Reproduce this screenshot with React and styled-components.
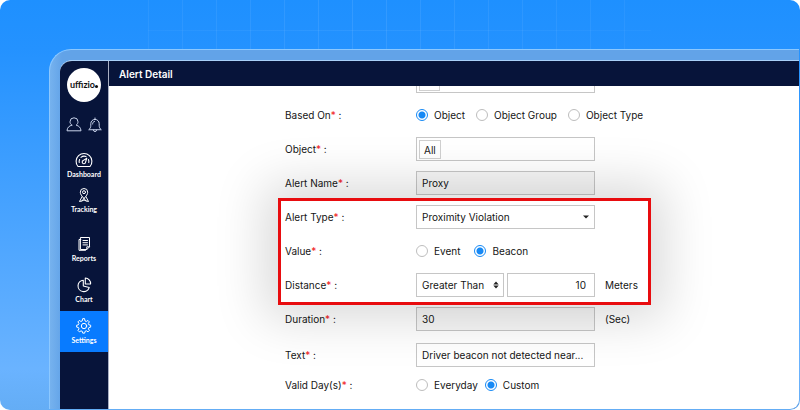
import React from "react";
import styled, { createGlobalStyle, css } from "styled-components";

const GlobalStyle = createGlobalStyle`
  *, *::before, *::after { box-sizing: border-box; }
  body { margin: 0; background: #fff; font-family: Inter, "Liberation Sans", sans-serif; }
`;

const line = "#c6c6c6";
const navy = "#07143a";

const Stage = styled.div`
  height: 100vh;
  display: flex;
  flex-direction: column;
  border-radius: 10px;
  overflow: hidden;
  padding: 0 1px 1px 0;
  background: linear-gradient(#1e90ff 0%, #2492ff 12%, #6ab3ff 90%, #64adf5 100%);
`;

const GridBand = styled.div`
  flex: none;
  height: 49px;
  margin: 0 148px;
  background:
    linear-gradient(rgba(255, 255, 255, 0.06), rgba(255, 255, 255, 0.06)) 0 30px / 100% 1px no-repeat,
    repeating-linear-gradient(90deg, rgba(255, 255, 255, 0.09) 0 1px, transparent 1px 34px);
  mask-image: linear-gradient(90deg, rgba(0, 0, 0, 0.6), #000 40%, rgba(0, 0, 0, 0.5));
`;

const Bezel = styled.div`
  flex: 1;
  min-height: 0;
  display: flex;
  margin-left: 49px;
  padding: 10px 0 0 10px;
  border: solid #8cc8ff;
  border-width: 1px 0 0 1px;
  border-top-left-radius: 22px;
  background: linear-gradient(90deg, #76b2ee, #62a3e8 12px);
`;

const Screen = styled.div`
  flex: 1;
  min-width: 0;
  display: flex;
  border-top: 1px solid #a9d0f8;
  border-top-left-radius: 12px;
  border-bottom-right-radius: 9px;
  overflow: hidden;
  background: #fff;
`;

const Sidebar = styled.aside`
  flex: none;
  width: 49px;
  display: flex;
  flex-direction: column;
  align-items: center;
  padding-top: 7px;
  border-right: 1px solid #a9b0c4;
  background: ${navy};
  color: #fff;
`;

const Logo = styled.div`
  width: 34px;
  height: 34px;
  display: flex;
  align-items: center;
  justify-content: center;
  border-radius: 50%;
  background: #fff;
  color: #111;
  font: 700 9px/12px Lato, sans-serif;
`;

const LogoDot = styled.i`
  width: 3px;
  height: 3px;
  margin-top: 2px;
  border-radius: 50%;
  background: #111;
`;

const QuickActions = styled.div`
  display: flex;
  gap: 6px;
  margin: 15px 0 12px;
`;

const IconButton = styled.button`
  padding: 0;
  border: 0;
  background: none;
  color: #c8d2ea;
  display: flex;
`;

const Nav = styled.nav`
  width: 100%;
  display: flex;
  flex-direction: column;
`;

const NavItem = styled.a`
  display: flex;
  flex-direction: column;
  align-items: center;
  gap: 1px;
  height: ${(p) => (p.$compact ? 35 : 41)}px;
  padding-top: 7px;
  margin-bottom: ${(p) => (p.$endsGroup ? 8 : 0)}px;
  color: #fff;
  background: ${(p) => (p.$active ? "#087bff" : "transparent")};
  font: 700 7px/10px Lato, sans-serif;
  text-decoration: none;
`;

const Main = styled.main`
  flex: 1;
  min-width: 0;
  display: flex;
  flex-direction: column;
`;

const TitleBar = styled.header`
  flex: none;
  height: 25px;
  display: flex;
  align-items: center;
  padding-left: 10px;
  background: ${navy};
`;

const Title = styled.h1`
  margin: 0;
  color: #fff;
  font-size: 10px;
  line-height: 16px;
  font-weight: 600;
`;

const Viewport = styled.div`
  flex: 1;
  min-height: 0;
  overflow: hidden;
`;

const Form = styled.form`
  display: flex;
  flex-direction: column;
  gap: 10px;
  margin-top: -17px;
  padding-left: 176px;
  color: #151515;
  font-size: 10px;
  line-height: 16px;
`;

const Row = styled.div`
  display: grid;
  grid-template-columns: 131px 1fr;
  align-items: center;
  min-height: ${(p) => (p.$short ? 16 : 24)}px;
  margin-top: ${(p) => (p.$spaced ? 2 : 0)}px;
`;

const Highlight = styled.section`
  position: relative;
  width: 373px;
  display: flex;
  flex-direction: column;
  gap: 10px;
  margin: -7px 0 -8px -7px;
  padding: 4px 4px 5px;
  border: 3px solid #e80c0f;
  background: #fff;
  box-shadow: 0 0 50px 14px rgba(0, 0, 0, 0.15);
`;

const Star = styled.span`
  color: #f01818;
`;

const Controls = styled.div`
  display: flex;
  align-items: center;
  gap: ${(p) => p.$gap || 0}px;
`;

const box = css`
  height: 24px;
  border: 1px solid ${line};
  border-radius: 0;
  color: #151515;
  font: inherit;
  outline: 0;
`;

const TextInput = styled.input`
  ${box}
  width: ${(p) => p.$width || 179}px;
  padding: 0 ${(p) => (p.$number ? 8 : 5)}px 0 5px;
  text-align: ${(p) => (p.$number ? "right" : "left")};
  text-overflow: ellipsis;
  background: ${(p) => (p.readOnly ? "rgba(0, 0, 0, 0.03)" : "#fff")};
`;

const TagBox = styled.div`
  ${box}
  width: 179px;
  display: flex;
  align-items: center;
  padding: 0 2px;
  background: #fff;
`;

const Tag = styled.span`
  min-width: 21px;
  height: 19px;
  padding: 0 4px;
  border: 1px solid #d0d0d0;
  line-height: 18px;
`;

const SelectWrap = styled.div`
  width: ${(p) => p.$width}px;
  display: grid;
  align-items: center;

  > * { grid-area: 1 / 1; }
  > svg { justify-self: end; margin-right: 5px; pointer-events: none; }
`;

const Select = styled.select`
  ${box}
  width: 100%;
  padding: 0 0 0 5px;
  appearance: none;
  background: #fff;
`;

const RadioLabel = styled.label`
  display: flex;
  align-items: center;
  gap: 6px;
  white-space: nowrap;
`;

const Radio = styled.input`
  appearance: none;
  width: 12px;
  height: 12px;
  margin: 0;
  border: 1px solid #bdbdbd;
  border-radius: 50%;
  background: #fff;

  &:checked {
    border-color: #1689f5;
    background: radial-gradient(circle, #1689f5 3px, #fff 4px);
  }
`;

const Unit = styled.span`
  margin-left: 10px;
`;

const stroke = { fill: "none", stroke: "currentColor", strokeLinecap: "round", strokeLinejoin: "round" };

const UserIcon = () => (
  <svg width="16" height="16" viewBox="0 0 16 16" {...stroke} strokeWidth="1">
    <path d="M5.8 8.200C4.400 7.100 4 5.800 4 4.800a4 4 0 0 1 8 0c0 1-.4 2.300-1.800 3.400 2.800.7 4.600 2.400 4.800 5.600H1c.2-3.200 2-4.900 4.800-5.600Z" />
  </svg>
);

const BellIcon = () => (
  <svg width="14" height="16" viewBox="0 0 14 16" {...stroke} strokeWidth="1">
    <path d="M7 1v1.400M1 12.500c1.300-1 1.800-2.200 1.800-4.300V6.600a4.200 4.200 0 0 1 8.400 0v1.600c0 2.100.5 3.300 1.800 4.300ZM5.400 13a1.600 1.600 0 0 0 3.200 0" />
    <path d="M4.600 7c0-1.400.7-2.400 2-2.700" />
  </svg>
);

const DashboardIcon = () => (
  <svg width="18" height="16" viewBox="0 0 18 16" {...stroke} strokeWidth="1.100">
    <path d="M3 14.500A7.900 7.900 0 1 1 15 14.500Z" />
    <path d="M4.200 10.500a4.900 4.900 0 0 1 .4-3M6 5.300a4.900 4.900 0 0 1 5-.8M13.400 7.500a4.900 4.900 0 0 1 .4 3" />
    <path d="M11.800 6.200 10.600 10a1.700 1.700 0 1 1-2.200-1.600Z" />
  </svg>
);

const TrackingIcon = () => (
  <svg width="16" height="16" viewBox="0 0 16 16" {...stroke} strokeWidth="1">
    <path d="M8 11.500C5.600 9 4.300 7 4.300 5.200a3.700 3.700 0 0 1 7.400 0C11.700 7 10.400 9 8 11.500Z" />
    <circle cx="8" cy="5.200" r="1.500" />
    <path d="M6 9.800 3.500 14.500l2.300-.5L8 11.500l2.200 2.500 2.300.5L10 9.800M5.800 14l2.200-1 2.200 1" />
  </svg>
);

const ReportsIcon = () => (
  <svg width="16" height="16" viewBox="0 0 16 16" {...stroke} strokeWidth="1">
    <path d="M4.800 1.500h8.700v9.300l-2.700 2.700H4.800ZM13.500 10.800h-2.700v2.700M4.800 3.500H3v10.800h6.500" />
    <path d="M7 4.500h4.500M7 6.700h4.500M7 8.900h4.500" />
  </svg>
);

const ChartIcon = () => (
  <svg width="16" height="16" viewBox="0 0 16 16" {...stroke} strokeWidth="1.100">
    <path d="M7.300 3.200a5.700 5.700 0 1 0 5.900 7.300L7.300 9Z" />
    <path d="M9.300 1v6h5.300A5.600 5.600 0 0 0 9.300 1Z" />
  </svg>
);

const SettingsIcon = () => (
  <svg width="16" height="16" viewBox="0 0 24 24" {...stroke} strokeWidth="1.500">
    <path d="m10 1.500-.6 2.800-2 .9L5 3.700 2.900 5.800l1.500 2.400-.8 2-2.600.6v2.900l2.700.6.8 2L3 18.700 5.100 20.800l2.400-1.500 2 .8.600 2.600h2.900l.6-2.700 2-.8 2.400 1.600 2.100-2.100-1.500-2.400.8-2 2.600-.6v-2.900l-2.700-.6-.8-2 1.500-2.400-2.100-2.100-2.400 1.500-2-.8-.6-2.900Z" />
    <circle cx="12" cy="12" r="4" />
  </svg>
);

const CaretIcon = () => (
  <svg width="8" height="6" viewBox="0 0 8 6"><path d="M1 1.500h6l-3 3Z" fill="#222" /></svg>
);

const SortIcon = () => (
  <svg width="6" height="8" viewBox="0 0 6 8"><path d="M.3 3.500 3 .5l2.700 3ZM.3 4.500 3 7.500l2.700-3Z" fill="#222" /></svg>
);

const navItems = [
  { label: "Dashboard", Icon: DashboardIcon, compact: true },
  { label: "Tracking", Icon: TrackingIcon, endsGroup: true },
  { label: "Reports", Icon: ReportsIcon },
  { label: "Chart", Icon: ChartIcon },
  { label: "Settings", Icon: SettingsIcon, active: true },
];

function Field({ label, htmlFor, gap, children, ...row }) {
  return (
    <Row {...row}>
      <label htmlFor={htmlFor}>{label}<Star>*</Star> :</label>
      <Controls $gap={gap}>{children}</Controls>
    </Row>
  );
}

function RadioOption({ name, label, checked }) {
  return (
    <RadioLabel>
      <Radio type="radio" name={name} defaultChecked={checked} />
      {label}
    </RadioLabel>
  );
}

export default function App() {
  return (
    <>
      <GlobalStyle />
      <Stage>
        <GridBand />
        <Bezel>
          <Screen>
            <Sidebar>
              <Logo>uffizio<LogoDot /></Logo>
              <QuickActions>
                <IconButton aria-label="Account"><UserIcon /></IconButton>
                <IconButton aria-label="Notifications"><BellIcon /></IconButton>
              </QuickActions>
              <Nav>
                {navItems.map(({ label, Icon, compact, endsGroup, active }) => (
                  <NavItem key={label} href="#" $compact={compact} $endsGroup={endsGroup} $active={active}>
                    <Icon />
                    {label}
                  </NavItem>
                ))}
              </Nav>
            </Sidebar>
            <Main>
              <TitleBar><Title>Alert Detail</Title></TitleBar>
              <Viewport>
                <Form>
                  <Row>
                    <span />
                    <TagBox><Tag /></TagBox>
                  </Row>
                  <Field label="Based On" gap={11}>
                    <RadioOption name="based" label="Object" checked />
                    <RadioOption name="based" label="Object Group" />
                    <RadioOption name="based" label="Object Type" />
                  </Field>
                  <Field label="Object">
                    <TagBox><Tag>All</Tag></TagBox>
                  </Field>
                  <Field label="Alert Name" htmlFor="name">
                    <TextInput id="name" defaultValue="Proxy" readOnly />
                  </Field>
                  <Highlight>
                    <Field label="Alert Type" htmlFor="type">
                      <SelectWrap $width={179}>
                        <Select id="type"><option>Proximity Violation</option></Select>
                        <CaretIcon />
                      </SelectWrap>
                    </Field>
                    <Field label="Value" gap={14}>
                      <RadioOption name="value" label="Event" />
                      <RadioOption name="value" label="Beacon" checked />
                    </Field>
                    <Field label="Distance" htmlFor="distance">
                      <Controls $gap={3}>
                        <SelectWrap $width={88}>
                          <Select aria-label="Comparison"><option>Greater Than</option></Select>
                          <SortIcon />
                        </SelectWrap>
                        <TextInput id="distance" $width={88} $number defaultValue="10" />
                      </Controls>
                      <Unit>Meters</Unit>
                    </Field>
                  </Highlight>
                  <Field label="Duration" htmlFor="duration">
                    <TextInput id="duration" defaultValue="30" readOnly />
                    <Unit>(Sec)</Unit>
                  </Field>
                  <Field label="Text" htmlFor="text" $spaced>
                    <TextInput id="text" defaultValue="Driver beacon not detected near..." />
                  </Field>
                  <Field label="Valid Day(s)" gap={7} $short>
                    <RadioOption name="days" label="Everyday" />
                    <RadioOption name="days" label="Custom" checked />
                  </Field>
                </Form>
              </Viewport>
            </Main>
          </Screen>
        </Bezel>
      </Stage>
    </>
  );
}
